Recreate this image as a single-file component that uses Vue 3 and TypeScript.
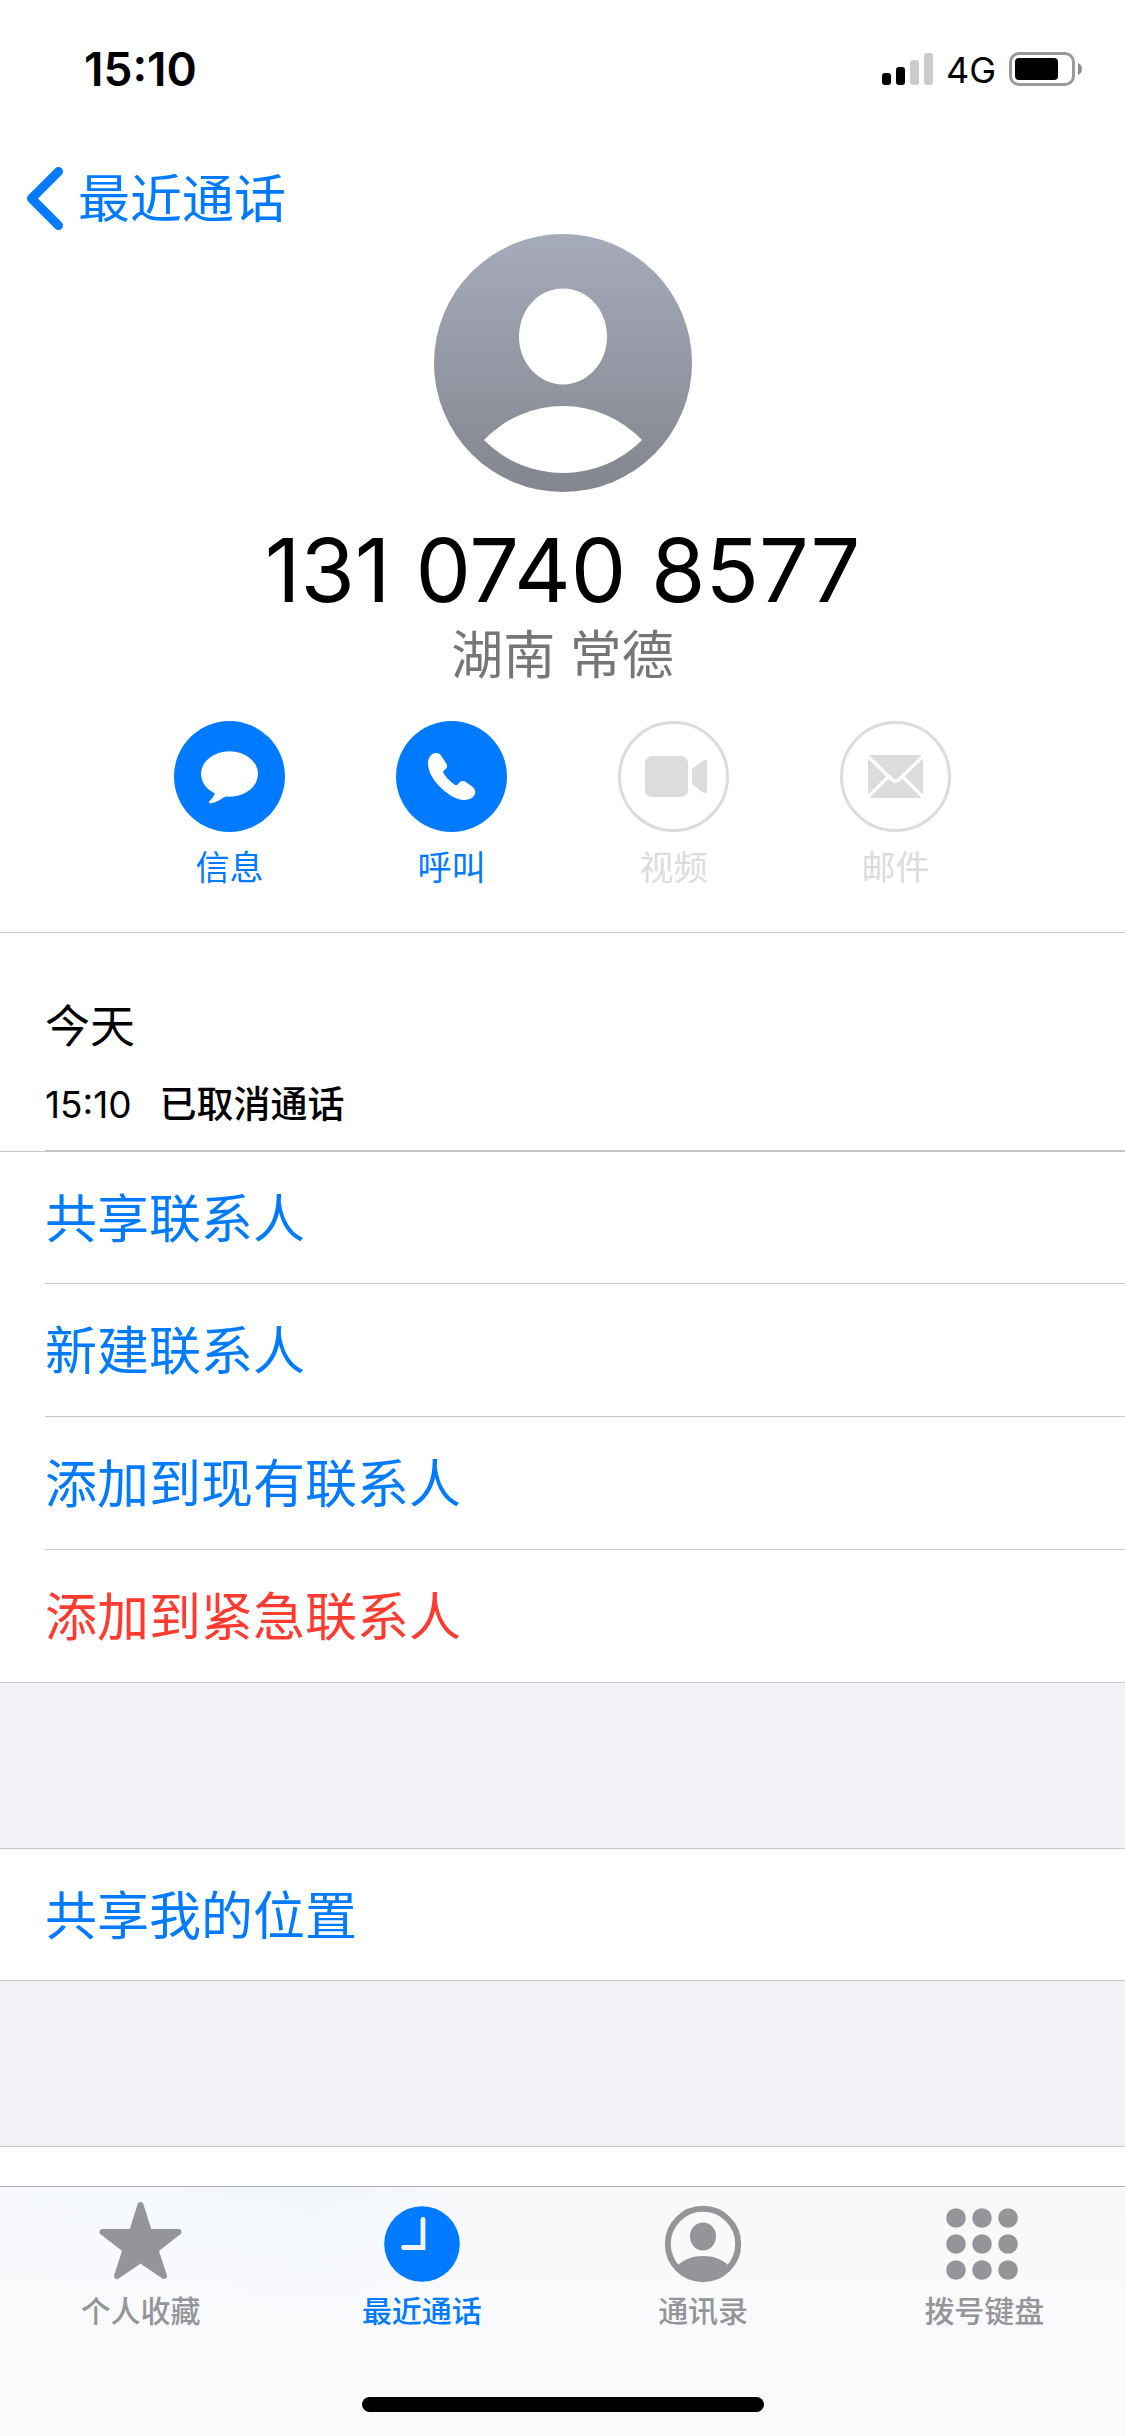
<script setup lang="ts">
import { ref } from 'vue'

type ActionIcon = 'message' | 'phone' | 'video' | 'mail'
type TabIcon = 'star' | 'clock' | 'person' | 'keypad'

interface ContactAction {
  icon: ActionIcon
  label: string
  enabled: boolean
}

interface Tab {
  icon: TabIcon
  label: string
}

const actions: ContactAction[] = [
  { icon: 'message', label: '信息', enabled: true },
  { icon: 'phone', label: '呼叫', enabled: true },
  { icon: 'video', label: '视频', enabled: false },
  { icon: 'mail', label: '邮件', enabled: false },
]

const contactRows = [
  { label: '共享联系人', danger: false },
  { label: '新建联系人', danger: false },
  { label: '添加到现有联系人', danger: false },
  { label: '添加到紧急联系人', danger: true },
]

const tabs: Tab[] = [
  { icon: 'star', label: '个人收藏' },
  { icon: 'clock', label: '最近通话' },
  { icon: 'person', label: '通讯录' },
  { icon: 'keypad', label: '拨号键盘' },
]

const activeTab = ref<TabIcon>('clock')
const keypadRows = [14, 40, 66]
const keypadColumns = [12, 38, 64]
</script>

<template>
  <div class="screen">
    <div class="status">
      <time class="clock">15:10</time>
      <div class="indicators">
        <svg class="signal" width="51" height="33" viewBox="0 0 51 33" aria-hidden="true">
          <rect x="0" y="20" width="9" height="12" rx="3" />
          <rect x="14" y="14" width="9" height="18" rx="3" />
          <rect class="weak" x="28" y="7" width="9" height="25" rx="3" />
          <rect class="weak" x="42" y="0" width="9" height="32" rx="3" />
        </svg>
        <span class="network">4G</span>
        <svg width="73" height="34" viewBox="0 0 73 34" aria-hidden="true">
          <rect x="1.5" y="1.5" width="63" height="31" rx="8.5" fill="none" stroke="#9a9a9a" stroke-width="3" />
          <rect x="6" y="6" width="43" height="22" rx="4" />
          <path d="M69 11C71.500 12 73 14 73 17S71.500 22 69 23Z" fill="#8e8e8e" />
        </svg>
      </div>
    </div>

    <nav class="nav">
      <a class="back" href="#recents">
        <svg width="38" height="64" viewBox="0 0 38 64" aria-hidden="true">
          <path d="M32.500 5.500L5.500 32.500L32.500 59.500" fill="none" stroke="currentColor" stroke-width="9" stroke-linecap="round" stroke-linejoin="round" />
        </svg>
        <span>最近通话</span>
      </a>
    </nav>

    <header class="contact">
      <svg class="avatar" width="258" height="258" viewBox="0 0 258 258" aria-hidden="true">
        <defs>
          <linearGradient id="avatar-fill" x1="0" y1="0" x2="0" y2="1">
            <stop offset="0" stop-color="#a6abba" />
            <stop offset="1" stop-color="#83868f" />
          </linearGradient>
        </defs>
        <circle cx="129" cy="129" r="129" fill="url(#avatar-fill)" />
        <path d="M129 54.500C154 54.500 173 76 173 103C173 129 153 150.500 129 150.500S85 129 85 103C85 76 104 54.500 129 54.500Z" fill="#fff" />
        <path d="M50 206A109 109 0 0 1 208 206A111 111 0 0 1 50 206Z" fill="#fff" />
      </svg>
      <h1 class="number">131 0740 8577</h1>
      <p class="place">湖南 常德</p>

      <div class="actions">
        <button
          v-for="action in actions"
          :key="action.icon"
          class="action"
          type="button"
          :disabled="!action.enabled"
        >
          <svg class="disc" width="111" height="111" viewBox="0 0 111 111" aria-hidden="true">
            <circle v-if="action.enabled" cx="55.5" cy="55.5" r="55.5" fill="currentColor" />
            <circle v-else cx="55.5" cy="55.5" r="54" fill="none" stroke="currentColor" stroke-width="3" />
            <g v-if="action.icon === 'message'" fill="#fff">
              <ellipse cx="55.5" cy="53" rx="28.5" ry="22.8" />
              <path d="M41 70C41 76 37 78 35.500 80C34 82 36 82.500 38 82C44 81 48 77 53 75Z" />
            </g>
            <path
              v-else-if="action.icon === 'phone'"
              fill="#fff"
              d="M32 42C32 36 36 32 40 32C43 32 45 34 46 36L50 42C52 45 51 47 49 48.500L47.500 50C46 51 50 56 53 59C57 63 60 65 61 64L64 61C66 59.500 68 60 70 61L76 65.500C79 68 80 70 79 73C78 76 74 79 68 79C60 79 50 72 43 65C36 57 32 50 32 42Z"
            />
            <g v-else-if="action.icon === 'video'" fill="currentColor">
              <rect x="27" y="35" width="43" height="41" rx="7" />
              <path d="M74 48L84.500 39.800C86.500 38.300 89 38.800 89 41.500V69.500C89 72.200 86.500 72.700 84.500 71.200L74 63Z" />
            </g>
            <g v-else>
              <rect x="28" y="34" width="55" height="43" rx="3" fill="currentColor" />
              <path d="M27 34.500L52 58.500Q55.500 62 59 58.500L84 34.500M27 77L48 56M84 77L63 56" fill="none" stroke="#fff" stroke-width="3.200" />
            </g>
          </svg>
          <span>{{ action.label }}</span>
        </button>
      </div>
    </header>

    <section class="history">
      <h2 class="day">今天</h2>
      <p class="call"><time>15:10</time><strong>已取消通话</strong></p>
    </section>

    <main class="groups">
      <ul class="group">
        <li v-for="row in contactRows" :key="row.label">
          <button class="row" :class="{ danger: row.danger }" type="button">{{ row.label }}</button>
        </li>
      </ul>
      <ul class="group">
        <li><button class="row" type="button">共享我的位置</button></li>
      </ul>
      <div class="next-group"></div>
    </main>

    <footer class="tabbar">
      <nav class="tabs">
        <a
          v-for="tab in tabs"
          :key="tab.icon"
          class="tab"
          :class="{ active: tab.icon === activeTab }"
          :href="'#' + tab.icon"
          @click.prevent="activeTab = tab.icon"
        >
          <svg width="80" height="80" viewBox="0 0 80 80" aria-hidden="true">
            <path
              v-if="tab.icon === 'star'"
              d="M39.500 1L48 28H77.500L54.500 46L63 72L39.500 56L16 72L24.500 46L1.500 28H31Z"
              fill="currentColor"
              stroke="currentColor"
              stroke-width="6"
              stroke-linejoin="round"
            />
            <g v-else-if="tab.icon === 'clock'">
              <circle cx="40" cy="40" r="37.8" fill="currentColor" />
              <path d="M41 15.500V43.500H21.500" fill="none" stroke="#f4f8fc" stroke-width="4.800" stroke-linecap="round" />
            </g>
            <g v-else-if="tab.icon === 'person'">
              <circle cx="40" cy="40" r="35.2" fill="none" stroke="currentColor" stroke-width="6" />
              <ellipse cx="40" cy="32.500" rx="13" ry="14" fill="currentColor" />
              <path d="M14 62C21 55 30 52 40 52S59 55 66 62A35 35 0 0 1 14 62Z" fill="currentColor" />
            </g>
            <g v-else fill="currentColor">
              <template v-for="cy in keypadRows" :key="cy">
                <circle v-for="cx in keypadColumns" :key="cx" :cx="cx" :cy="cy" r="9.800" />
              </template>
            </g>
          </svg>
          <span>{{ tab.label }}</span>
        </a>
      </nav>
      <div class="home-indicator"></div>
    </footer>
  </div>
</template>

<style>
body {
  background: #fff;
}
</style>

<style scoped>
.screen {
  display: flex;
  flex-direction: column;
  min-height: 100vh;
  background: #fff;
  color: #000;
  font-family: "Inter", "Noto Sans CJK SC", sans-serif;
}

h1,
h2,
p,
ul {
  margin: 0;
  padding: 0;
  font-weight: 400;
  list-style: none;
}

button {
  border: 0;
  padding: 0;
  background: none;
  font: inherit;
  cursor: pointer;
}

a {
  text-decoration: none;
}

svg {
  display: block;
  flex: none;
}

.status {
  display: flex;
  align-items: center;
  justify-content: space-between;
  padding: 44px 43px 0 84px;
  line-height: 50px;
}

.clock {
  font-size: 46px;
  font-weight: 600;
}

.indicators {
  display: flex;
  align-items: center;
  gap: 13px;
}

.signal .weak {
  fill: #cbcbcb;
}

.network {
  padding-top: 2px;
  font-size: 36px;
  font-weight: 400;
  line-height: 48px;
}

.nav {
  display: flex;
  padding: 72px 26px 0;
}

.back {
  display: flex;
  align-items: center;
  gap: 14px;
  color: #007aff;
  font-size: 52px;
  line-height: 60px;
}

.back span {
  padding-top: 4px;
}

.contact {
  display: flex;
  flex-direction: column;
  align-items: center;
  padding: 4px 0 44px;
  border-bottom: 1px solid #c6c6c8;
}

.number {
  margin-top: 26px;
  font-size: 88px;
  line-height: 104px;
}

.place {
  padding-top: 4px;
  color: #767676;
  font-size: 52px;
  line-height: 60px;
}

.actions {
  display: flex;
  gap: 111px;
  margin-top: 35px;
}

.action {
  display: flex;
  flex-direction: column;
  align-items: center;
  gap: 16px;
  color: #007aff;
  font-size: 34px;
  line-height: 40px;
}

.action:disabled {
  color: #dcdcdd;
  cursor: default;
}

.history {
  padding: 64px 0 0 45px;
}

.day {
  font-size: 45px;
  line-height: 60px;
}

.call {
  display: flex;
  gap: 28px;
  padding: 24px 0 21px;
  border-bottom: 1px solid #c6c6c8;
  font-size: 37px;
  line-height: 48px;
}

.call strong {
  font-weight: 500;
}

.groups {
  display: flex;
  flex: 1;
  flex-direction: column;
  gap: 165px;
  background: #f2f1f7;
}

.group {
  border-bottom: 1px solid #c6c6c8;
  background: #fff;
}

.group li + li::before {
  display: block;
  height: 1px;
  margin-left: 45px;
  background: #c6c6c8;
  content: "";
}

.row {
  box-sizing: border-box;
  width: 100%;
  min-height: 132px;
  padding: 4px 45px 0;
  color: #007aff;
  font-size: 52px;
  line-height: 60px;
  text-align: left;
}

.group li:first-child .row {
  border-top: 1px solid #c6c6c8;
}

.row.danger {
  color: #ff3b30;
}

.next-group {
  flex: 1;
  min-height: 39px;
  border-top: 1px solid #c6c6c8;
  background: #fff;
}

.tabbar {
  display: flex;
  flex-direction: column;
  align-items: center;
  padding: 17px 0 24px;
  border-top: 1px solid #adadaf;
  background:
    linear-gradient(to bottom, rgba(250, 250, 252, 0), #fafafc 60%),
    linear-gradient(to right, #f6f8fb, #f2f7fc 28%, #f8f8f8 48%, #f8f8f8);
}

.tabs {
  display: flex;
  align-self: stretch;
}

.tab {
  display: flex;
  flex: 1;
  flex-direction: column;
  align-items: center;
  gap: 7px;
  color: #949599;
  font-size: 30px;
  font-weight: 500;
  line-height: 40px;
}

.tab svg {
  overflow: visible;
}

.tab.active {
  color: #007aff;
}

.home-indicator {
  width: 402px;
  height: 15px;
  margin-top: 66px;
  border-radius: 8px;
  background: #000;
}
</style>
